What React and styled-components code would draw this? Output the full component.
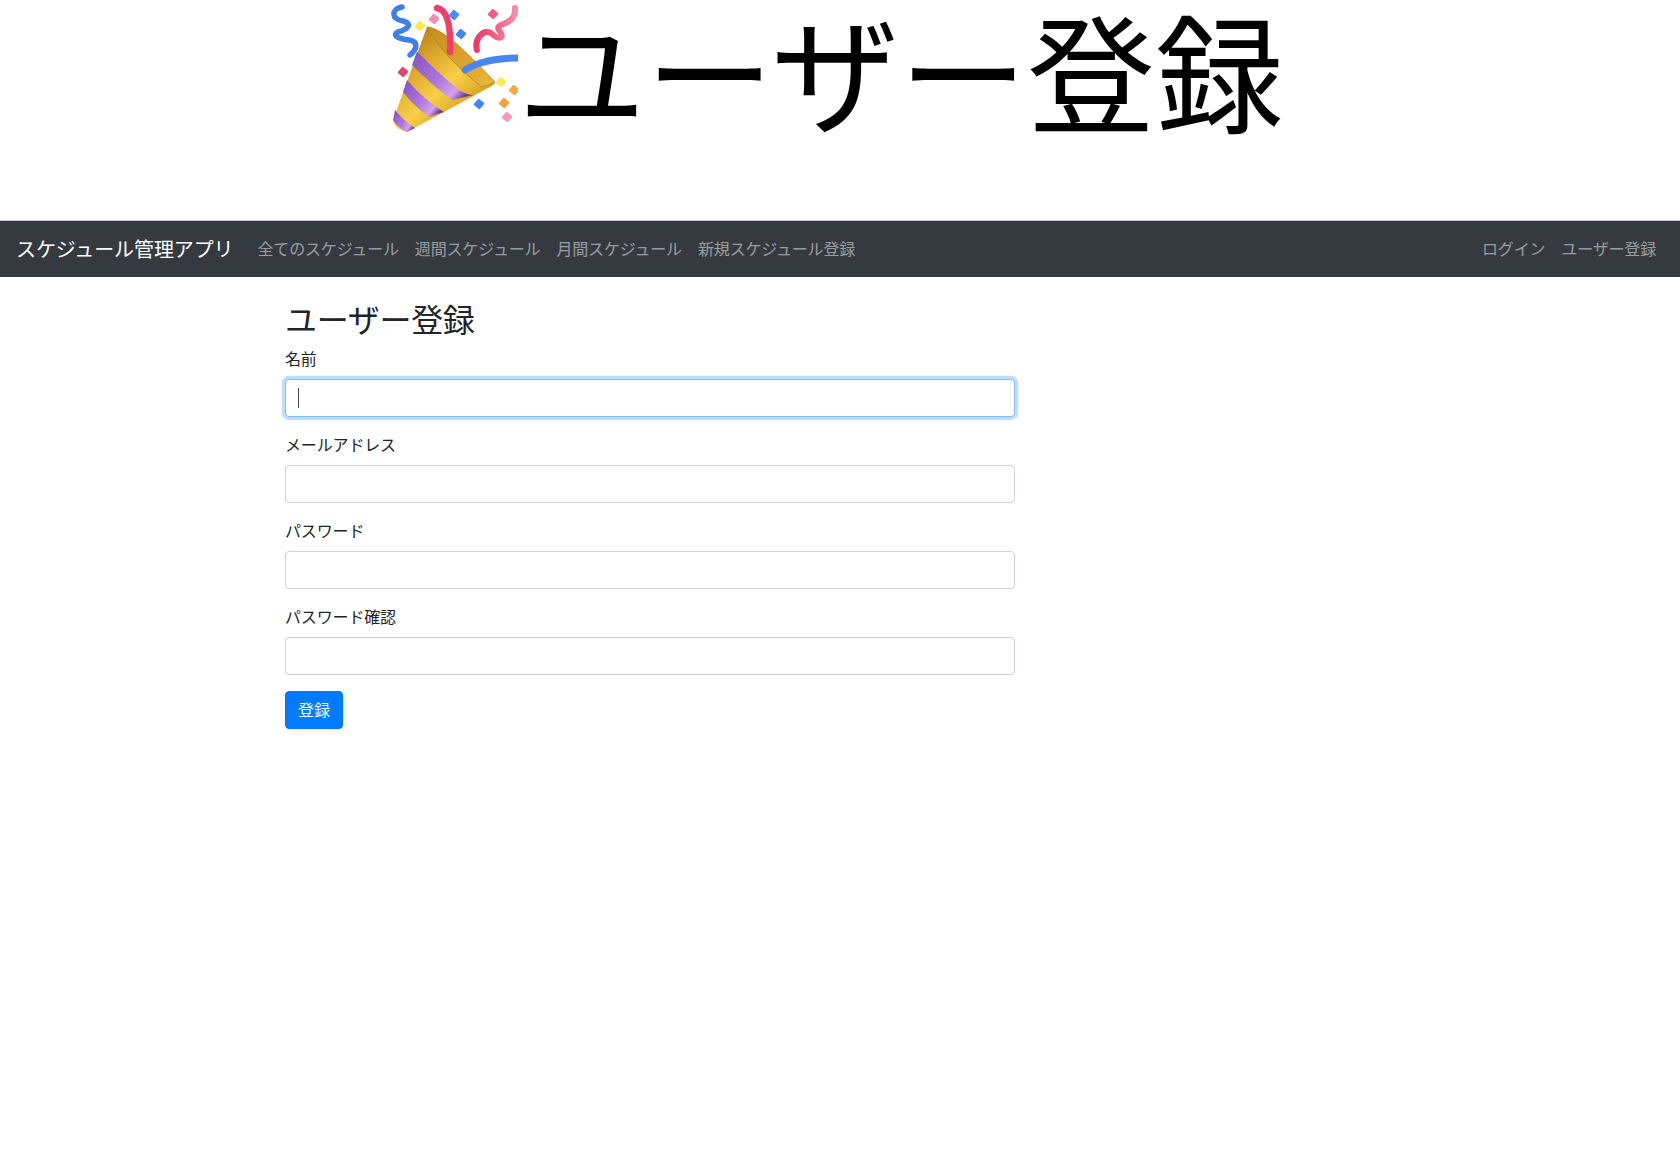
import styled, { createGlobalStyle } from "styled-components";

const GlobalStyle = createGlobalStyle`
  html, body {
    margin: 0;
    padding: 0;
    background: #fff;
  }
  body {
    font-family: "Liberation Sans", "Noto Sans CJK JP", sans-serif;
    font-size: 16px;
    line-height: 1.5;
    color: #212529;
  }
  * {
    box-sizing: border-box;
  }
`;

const Banner = styled.h1`
  display: flex;
  justify-content: center;
  align-items: flex-start;
  height: 220px;
  margin: 0;
  padding-right: 7px;
  font-size: 128px;
  font-weight: 400;
  line-height: 1.2;
  color: #000;
`;

const BannerText = styled.span`
  margin-top: 3px;
`;

const PopperIcon = styled.svg`
  flex: none;
  width: 128px;
  height: 135px;
`;

const Navbar = styled.nav`
  display: flex;
  align-items: center;
  height: 57px;
  padding: 8px 16px;
  border-top: 1px solid #c4c6c8;
  background: #343a40;
`;

const Brand = styled.a`
  margin-right: 16px;
  padding-top: 1px;
  font-size: 20px;
  line-height: 30px;
  letter-spacing: -0.1px;
  color: #fff;
`;

const NavList = styled.div`
  display: flex;
  margin-left: ${(p) => (p.$right ? "auto" : "0")};
`;

const NavLink = styled.a`
  padding: 9px 8px 7px;
  letter-spacing: -0.17px;
  color: rgba(255, 255, 255, 0.5);
`;

const Container = styled.main`
  width: 1140px;
  margin: 0 auto;
  padding: 24px 15px 0;
`;

const FormColumn = styled.div`
  width: 730px;
`;

const Title = styled.h2`
  margin: 0 0 7px;
  padding-top: 1px;
  font-size: 32px;
  font-weight: 400;
  line-height: 1.2;
  letter-spacing: -0.3px;
`;

const FormGroup = styled.div`
  margin-bottom: 16px;
`;

const Label = styled.label`
  display: block;
  margin-bottom: 7px;
  padding-top: 1px;
  letter-spacing: -0.15px;
`;

const InputWrap = styled.div`
  position: relative;
`;

const Input = styled.input`
  display: block;
  width: 100%;
  height: 38px;
  padding: 6px 12px;
  border: 1px solid ${(p) => (p.$focused ? "#80bdff" : "#ced4da")};
  border-radius: 4px;
  outline: 0;
  background: #fff;
  color: #495057;
  font: inherit;
  caret-color: transparent;
  box-shadow: ${(p) => (p.$focused ? "0 0 0 3.2px rgba(0, 123, 255, 0.25)" : "none")};
`;

const Caret = styled.span`
  position: absolute;
  top: 9px;
  left: 13px;
  width: 1px;
  height: 20px;
  background: #495057;
`;

const SubmitButton = styled.button`
  display: block;
  height: 38px;
  padding: 7px 12px 5px;
  border: 1px solid #007bff;
  border-radius: 4px;
  background: #007bff;
  color: #fff;
  font: inherit;
`;

const fields = [
  { label: "名前", type: "text", focused: true },
  { label: "メールアドレス", type: "email" },
  { label: "パスワード", type: "password" },
  { label: "パスワード確認", type: "password" },
];

const confetti = [
  [48, 26, "#ffe94a"],
  [62, 19, "#f58fb0"],
  [82, 15, "#4a8df5"],
  [89, 34, "#3f86f0"],
  [121, 14, "#ee5f8c"],
  [31, 72, "#e0466a"],
  [129, 82, "#ffe75c"],
  [142, 90, "#f7a74a"],
  [132, 103, "#f7a13c"],
  [107, 104, "#3f86f0"],
  [135, 117, "#f79ac0"],
];

function Popper() {
  return (
    <PopperIcon viewBox="18 0 128 135">
      <defs>
        <linearGradient id="gold" x1="0.1" y1="0.2" x2="0.75" y2="0.95">
          <stop offset="0" stopColor="#bb8418" />
          <stop offset="0.3" stopColor="#e3af30" />
          <stop offset="0.55" stopColor="#f6d048" />
          <stop offset="0.8" stopColor="#e0a92a" />
          <stop offset="1" stopColor="#a87514" />
        </linearGradient>
        <linearGradient id="inner" x1="0" y1="0" x2="1" y2="1">
          <stop offset="0" stopColor="#c48d1e" />
          <stop offset="0.6" stopColor="#dca62e" />
          <stop offset="1" stopColor="#eabb3c" />
        </linearGradient>
        <linearGradient id="purple" x1="0" y1="0" x2="1" y2="0.7">
          <stop offset="0" stopColor="#8450bc" />
          <stop offset="0.6" stopColor="#b27adf" />
          <stop offset="0.85" stopColor="#d6a2ee" />
          <stop offset="1" stopColor="#6f4290" />
        </linearGradient>
        <linearGradient id="ribbon" x1="0" y1="0" x2="1" y2="0">
          <stop offset="0" stopColor="#f0396a" />
          <stop offset="1" stopColor="#f58aa8" />
        </linearGradient>
      </defs>
      <path
        d="M30 7 C19 9 19 19 31 21 C42 24 34 30 26 32 C19 36 28 39 37 40 C48 42 44 50 38 55"
        fill="none"
        stroke="#3f7fe8"
        strokeWidth="5.5"
        strokeLinecap="round"
      />
      <path
        d="M105 50 C102 40 110 29 119 33 C126 40 134 39 127 30 C122 22 144 27 143 8"
        fill="none"
        stroke="url(#ribbon)"
        strokeWidth="6"
        strokeLinecap="round"
      />
      {confetti.map(([x, y, color]) => (
        <rect
          key={`${x}-${y}`}
          x={x - 4}
          y={y - 4}
          width="8"
          height="8"
          rx="1"
          fill={color}
          transform={`rotate(40 ${x} ${y})`}
        />
      ))}
      <path
        d="M55 27 L21 120 Q22 129 35 132 L116 88 Q124 84 122.7 81.7 C100 58 72 28 55 27 Z"
        fill="url(#gold)"
      />
      <path d="M45 51.5 Q66 73 87 90 Q95 95 102 95 L80 100 Q60 85 40 65 Z" fill="url(#purple)" />
      <path d="M35 80 Q52 100 72 112 L57 117 Q42 106 31 92 Z" fill="url(#purple)" />
      <path d="M23 110 Q33 122 43 128 L35 132 Q26 128 21 120 Z" fill="url(#purple)" />
      <path
        d="M55 27 C72 28 100 58 122.7 81.7 Q118 85 110 87 C90 72 65 47 55 27 Z"
        fill="url(#inner)"
        stroke="#b9821c"
        strokeWidth="0.8"
      />
      <path
        d="M65 8 C76 10 79 28 78 52"
        fill="none"
        stroke="#ef3f6c"
        strokeWidth="6.5"
        strokeLinecap="round"
      />
      <path
        d="M93 70 Q112 58 146 58"
        fill="none"
        stroke="#4a86f0"
        strokeWidth="7"
        strokeLinecap="round"
      />
    </PopperIcon>
  );
}

export default function App() {
  return (
    <>
      <GlobalStyle />
      <Banner>
        <Popper />
        <BannerText>ユーザー登録</BannerText>
      </Banner>
      <Navbar>
        <Brand>スケジュール管理アプリ</Brand>
        <NavList>
          <NavLink>全てのスケジュール</NavLink>
          <NavLink>週間スケジュール</NavLink>
          <NavLink>月間スケジュール</NavLink>
          <NavLink>新規スケジュール登録</NavLink>
        </NavList>
        <NavList $right>
          <NavLink>ログイン</NavLink>
          <NavLink>ユーザー登録</NavLink>
        </NavList>
      </Navbar>
      <Container>
        <FormColumn>
          <Title>ユーザー登録</Title>
          {fields.map((field) => (
            <FormGroup key={field.label}>
              <Label>{field.label}</Label>
              <InputWrap>
                <Input type={field.type} $focused={field.focused} />
                {field.focused && <Caret />}
              </InputWrap>
            </FormGroup>
          ))}
          <SubmitButton type="button">登録</SubmitButton>
        </FormColumn>
      </Container>
    </>
  );
}
